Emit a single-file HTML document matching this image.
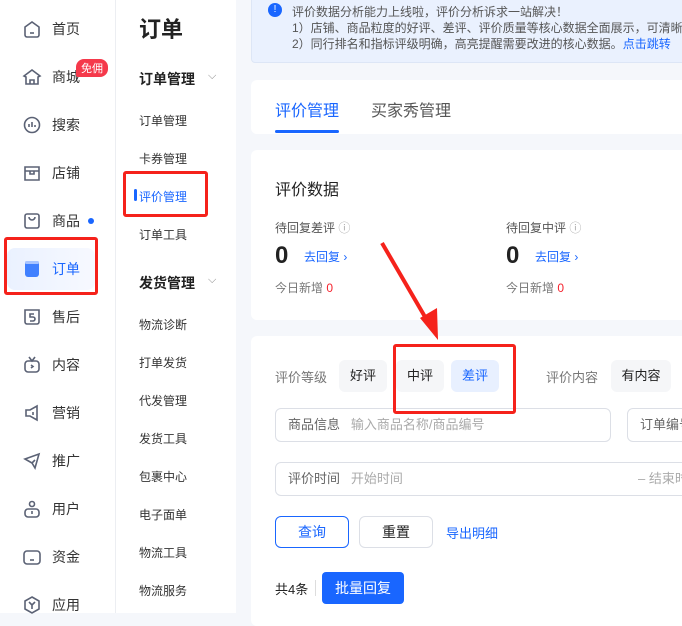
<!DOCTYPE html>
<html><head><meta charset="utf-8"><style>
*{margin:0;padding:0;box-sizing:border-box}
body{width:682px;height:613px;overflow:hidden;position:relative;background:#f5f7fb;font-family:"Liberation Sans","Noto Sans CJK SC",sans-serif;color:#333}
.a{position:absolute}
.nav{left:0;top:0;width:116px;height:613px;background:#fff;border-right:1px solid #eceef2}
.ni{position:absolute;left:22px;font-size:14px;color:#333;display:flex;align-items:center}
.ni svg{width:20px;height:20px;margin-right:10px}
.sub{left:116px;top:0;width:120px;height:613px;background:#fff}
.si{position:absolute;left:23px;font-size:12px;color:#333}
.sh{position:absolute;left:23px;font-size:14px;font-weight:bold;color:#222}
.card{background:#fff;border-radius:6px}
.red{position:absolute;border:3px solid #f5221b;border-radius:3px}
.tag{position:absolute;height:32px;line-height:32px;border-radius:6px;background:#f5f6f8;font-size:13px;text-align:center;color:#222}
.inp{position:absolute;height:34px;border:1px solid #dcdfe6;border-radius:6px;font-size:13px;line-height:32px;color:#888;padding-left:12px;background:#fff}
</style></head><body>
<div class="a nav">
 <div class="ni" style="top:19px"><svg viewBox="0 0 20 20" fill="none" stroke="#5b6275" stroke-width="1.6"><path d="M3 8l7-5 7 5v8a2 2 0 0 1-2 2H5a2 2 0 0 1-2-2z"/><path d="M8 14h4"/></svg>首页</div>
 <div class="ni" style="top:67px"><svg viewBox="0 0 20 20" fill="none" stroke="#5b6275" stroke-width="1.6"><path d="M2 9l8-6 8 6-2 1v7H4v-7z"/><path d="M8 17v-4h4v4"/></svg>商城</div>
 <div class="a" style="left:76px;top:59px;background:#f5394b;color:#fff;font-size:11px;padding:1px 5px;border-radius:8px 8px 8px 2px">免佣</div>
 <div class="ni" style="top:115px"><svg viewBox="0 0 20 20" fill="none" stroke="#5b6275" stroke-width="1.6"><circle cx="10" cy="10" r="7.5"/><path d="M7 12V9M10 12V7M13 12v-2"/></svg>搜索</div>
 <div class="ni" style="top:163px"><svg viewBox="0 0 20 20" fill="none" stroke="#5b6275" stroke-width="1.6"><path d="M3 4h14v13H3zM3 8h14M8 8v3h4V8"/></svg>店铺</div>
 <div class="ni" style="top:211px"><svg viewBox="0 0 20 20" fill="none" stroke="#5b6275" stroke-width="1.6"><rect x="3" y="3" width="14" height="14" rx="2"/><path d="M7 6a3 3 0 0 0 6 0"/></svg>商品<span style="display:inline-block;width:6px;height:6px;border-radius:50%;background:#1966ff;margin-left:8px"></span></div>
 <div class="a" style="left:7px;top:248px;width:88px;height:42px;background:linear-gradient(90deg,#eaf1ff,#f7f9ff);border-radius:8px"></div>
 <div class="ni" style="top:259px;color:#1966ff"><svg viewBox="0 0 20 20"><rect x="3" y="2" width="14" height="16" rx="3" fill="#4080ff"/><rect x="3" y="2" width="14" height="3" rx="1.5" fill="#a8c4ff"/></svg>订单</div>
 <div class="ni" style="top:307px"><svg viewBox="0 0 20 20" fill="none" stroke="#5b6275" stroke-width="1.6"><path d="M3 3h14v12a2 2 0 0 1-2 2H5a2 2 0 0 1-2-2z"/><path d="M12 7H8v3h3a2 2 0 0 1 0 4H8"/></svg>售后</div>
 <div class="ni" style="top:355px"><svg viewBox="0 0 20 20" fill="none" stroke="#5b6275" stroke-width="1.6"><rect x="3" y="6" width="14" height="11" rx="3"/><path d="M7 2l3 4 3-4M9 10l2 1.5L9 13"/></svg>内容</div>
 <div class="ni" style="top:403px"><svg viewBox="0 0 20 20" fill="none" stroke="#5b6275" stroke-width="1.6"><path d="M15 3v14L8 13H4V7h4z"/><path d="M11 9v3"/></svg>营销</div>
 <div class="ni" style="top:451px"><svg viewBox="0 0 20 20" fill="none" stroke="#5b6275" stroke-width="1.6"><path d="M3 8l14-5-4 14-3-5z"/><path d="M10 12l3-3"/></svg>推广</div>
 <div class="ni" style="top:499px"><svg viewBox="0 0 20 20" fill="none" stroke="#5b6275" stroke-width="1.6"><circle cx="10" cy="5" r="2.5"/><rect x="3" y="10" width="14" height="8" rx="3"/><path d="M10 12v3"/></svg>用户</div>
 <div class="ni" style="top:547px"><svg viewBox="0 0 20 20" fill="none" stroke="#5b6275" stroke-width="1.6"><rect x="2" y="4" width="16" height="13" rx="3"/><path d="M8 13h4"/></svg>资金</div>
 <div class="ni" style="top:595px"><svg viewBox="0 0 20 20" fill="none" stroke="#5b6275" stroke-width="1.6"><path d="M10 2l7 4v8l-7 4-7-4V6z"/><path d="M7 7l3 3 3-3M10 10v4"/></svg>应用</div>
</div>
<div class="a sub">
 <div class="a" style="left:23px;top:12px;font-size:22px;font-weight:bold;color:#222">订单</div>
 <div class="sh" style="top:69px">订单管理</div><div class="a" style="left:92px;top:70px;color:#888;font-size:11px">⌵</div>
 <div class="si" style="top:112px">订单管理</div>
 <div class="si" style="top:150px">卡券管理</div>
 <div class="a" style="left:18px;top:189px;width:3px;height:12px;background:#1966ff;border-radius:2px"></div>
 <div class="si" style="top:188px;color:#1966ff">评价管理</div>
 <div class="si" style="top:226px">订单工具</div>
 <div class="sh" style="top:273px">发货管理</div><div class="a" style="left:92px;top:274px;color:#888;font-size:11px">⌵</div>
 <div class="si" style="top:316px">物流诊断</div>
 <div class="si" style="top:354px">打单发货</div>
 <div class="si" style="top:392px">代发管理</div>
 <div class="si" style="top:430px">发货工具</div>
 <div class="si" style="top:468px">包裹中心</div>
 <div class="si" style="top:506px">电子面单</div>
 <div class="si" style="top:544px">物流工具</div>
 <div class="si" style="top:582px">物流服务</div>
</div>
<div class="a" style="left:251px;top:-4px;width:440px;height:67px;background:#eaf1fe;border:1px solid #dde6f6;border-radius:4px;font-size:12px;color:#555;line-height:16px;padding:7px 0 0 40px">
 <div class="a" style="left:16px;top:6px;width:14px;height:14px;border-radius:50%;background:#1966ff;color:#fff;font-size:10px;text-align:center;line-height:14px">!</div>
 评价数据分析能力上线啦，评价分析诉求一站解决！<br>1）店铺、商品粒度的好评、差评、评价质量等核心数据全面展示，可清晰<br>2）同行排名和指标评级明确，高亮提醒需要改进的核心数据。<span style="color:#1966ff">点击跳转</span>
</div>
<div class="a card" style="left:251px;top:80px;width:440px;height:54px">
 <div class="a" style="left:24px;top:17px;font-size:16px;color:#1966ff">评价管理</div>
 <div class="a" style="left:120px;top:17px;font-size:16px;color:#555">买家秀管理</div>
 <div class="a" style="left:24px;top:50px;width:64px;height:3px;background:#1966ff;border-radius:2px"></div>
</div>
<div class="a card" style="left:251px;top:150px;width:440px;height:170px">
 <div class="a" style="left:24px;top:26px;font-size:16px;color:#222">评价数据</div>
 <div class="a" style="left:24px;top:69px;font-size:12px;color:#555">待回复差评 <span style="color:#aaa">ⓘ</span></div>
 <div class="a" style="left:24px;top:92px;font-size:24px;font-weight:bold;color:#222">0</div>
 <div class="a" style="left:53px;top:98px;font-size:12px;color:#1966ff">去回复 ›</div>
 <div class="a" style="left:24px;top:129px;font-size:12px;color:#777">今日新增 <span style="color:#f5222d">0</span></div>
 <div class="a" style="left:255px;top:69px;font-size:12px;color:#555">待回复中评 <span style="color:#aaa">ⓘ</span></div>
 <div class="a" style="left:255px;top:92px;font-size:24px;font-weight:bold;color:#222">0</div>
 <div class="a" style="left:284px;top:98px;font-size:12px;color:#1966ff">去回复 ›</div>
 <div class="a" style="left:255px;top:129px;font-size:12px;color:#777">今日新增 <span style="color:#f5222d">0</span></div>
</div>
<div class="a card" style="left:251px;top:336px;width:440px;height:290px">
 <div class="a" style="left:24px;top:31px;font-size:13px;color:#777">评价等级</div>
 <div class="tag" style="left:88px;top:24px;width:48px">好评</div>
 <div class="tag" style="left:145px;top:24px;width:48px">中评</div>
 <div class="tag" style="left:200px;top:24px;width:48px;background:#e8f0ff;color:#1966ff">差评</div>
 <div class="a" style="left:295px;top:31px;font-size:13px;color:#777">评价内容</div>
 <div class="tag" style="left:360px;top:24px;width:60px">有内容</div>
 <div class="inp" style="left:24px;top:72px;width:336px"><span style="color:#666">商品信息</span>&nbsp;&nbsp;&nbsp;<span style="color:#aaa">输入商品名称/商品编号</span></div>
 <div class="inp" style="left:376px;top:72px;width:80px;color:#666">订单编号</div>
 <div class="inp" style="left:24px;top:126px;width:430px"><span style="color:#666">评价时间</span>&nbsp;&nbsp;&nbsp;<span style="color:#aaa">开始时间</span><span class="a" style="left:362px;color:#aaa">– 结束时间</span></div>
 <div class="a" style="left:24px;top:180px;width:74px;height:32px;border:1px solid #1966ff;border-radius:6px;color:#1966ff;font-size:14px;text-align:center;line-height:30px">查询</div>
 <div class="a" style="left:108px;top:180px;width:74px;height:32px;border:1px solid #dcdfe6;border-radius:6px;color:#222;font-size:14px;text-align:center;line-height:30px">重置</div>
 <div class="a" style="left:195px;top:187px;font-size:13px;color:#1966ff">导出明细</div>
 <div class="a" style="left:24px;top:243px;font-size:13px;color:#222">共4条</div>
 <div class="a" style="left:64px;top:244px;width:1px;height:16px;background:#ddd"></div>
 <div class="a" style="left:71px;top:236px;width:82px;height:32px;background:#1966ff;border-radius:4px;color:#fff;font-size:14px;text-align:center;line-height:32px">批量回复</div>
</div>
<div class="red" style="left:4px;top:237px;width:94px;height:58px"></div>
<div class="red" style="left:123px;top:171px;width:85px;height:46px"></div>
<div class="red" style="left:393px;top:344px;width:123px;height:70px"></div>
<svg class="a" style="left:0;top:0" width="682" height="613"><path d="M382 243L428 322" stroke="#f5221b" stroke-width="4"/><path d="M420 318L438 340L437 308z" fill="#f5221b"/></svg>
</body></html>
